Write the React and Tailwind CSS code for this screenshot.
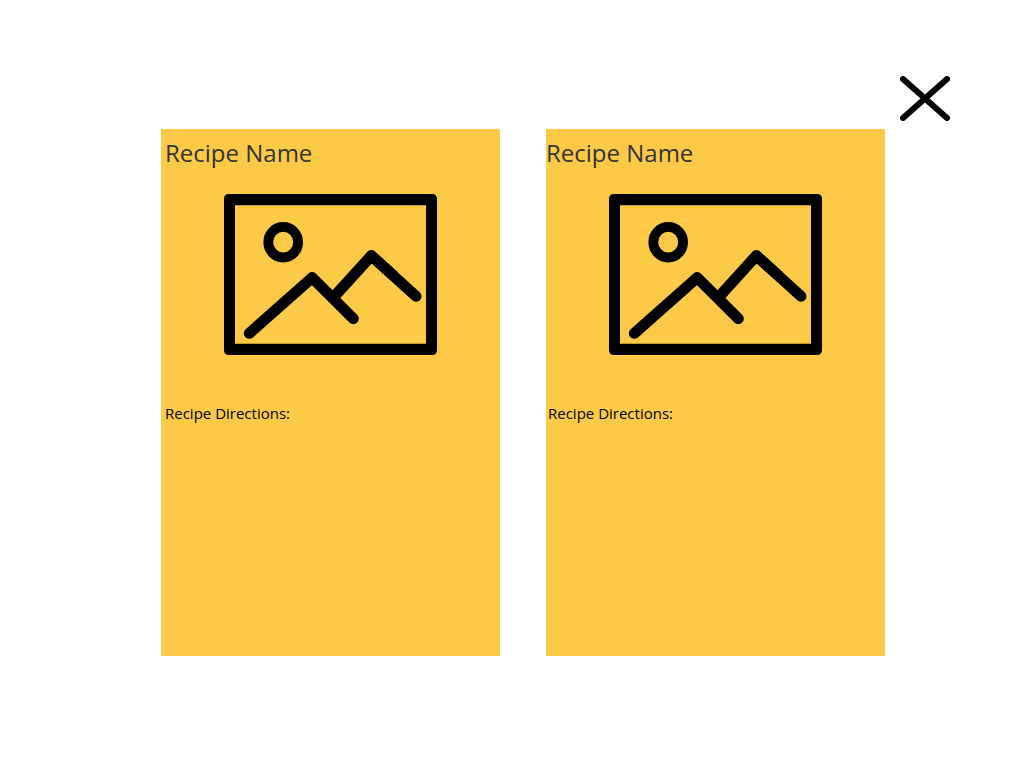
function CloseIcon() {
  return (
    <svg viewBox="0 0 50 45" className="h-[45px] w-[50px]" fill="none" stroke="currentColor" strokeWidth="6" strokeLinecap="round" aria-hidden="true">
      <path d="M3 3 47 42M47 3 3 42" />
    </svg>
  );
}

function PicturePlaceholder() {
  return (
    <svg viewBox="0 0 213 161" className="h-[161px] w-[213px]" fill="none" stroke="#000" strokeWidth="11" strokeLinecap="round" role="img" aria-label="Recipe picture">
      <path fill="#000" fillRule="evenodd" stroke="none" d="M5 0H208Q213 0 213 5V156Q213 161 208 161H5Q0 161 0 156V5Q0 0 5 0ZM11 11.3V149.7H202V11.3Z" />
      <ellipse cx="59.2" cy="48.2" rx="14.9" ry="15.3" strokeWidth="9.8" />
      <path strokeLinejoin="round" d="M25.3 139.3 88.2 83.6 129.3 124.7" />
      <path strokeLinejoin="round" strokeLinecap="butt" d="M108 105 147.3 61.7 170 82" />
      <path strokeLinejoin="round" d="M147.3 61.7 192 102.3" />
    </svg>
  );
}

function RecipeCard({ titleInset, directionsInset }) {
  return (
    <article className="min-h-[527px] min-w-0 bg-[#fcca46] pt-2">
      <h2 className={`text-2xl leading-8 text-[#333333] ${titleInset}`}>Recipe Name</h2>
      <div className="mt-[25px] flex justify-center">
        <PicturePlaceholder />
      </div>
      <p className={`mt-12 text-[15px] leading-5 text-black ${directionsInset}`}>Recipe Directions:</p>
    </article>
  );
}

export default function App() {
  return (
    <div className="min-h-screen bg-white font-['Open_Sans',sans-serif]">
      <header className="flex justify-end pt-[76px] pr-[74px]">
        <button type="button" aria-label="Close" className="block cursor-pointer text-black">
          <CloseIcon />
        </button>
      </header>
      <main className="mt-2 grid grid-cols-2 gap-[46px] pr-[139px] pl-[161px]">
        <RecipeCard titleInset="pl-1" directionsInset="pl-1" />
        <RecipeCard titleInset="pl-0" directionsInset="pl-0.5" />
      </main>
    </div>
  );
}
